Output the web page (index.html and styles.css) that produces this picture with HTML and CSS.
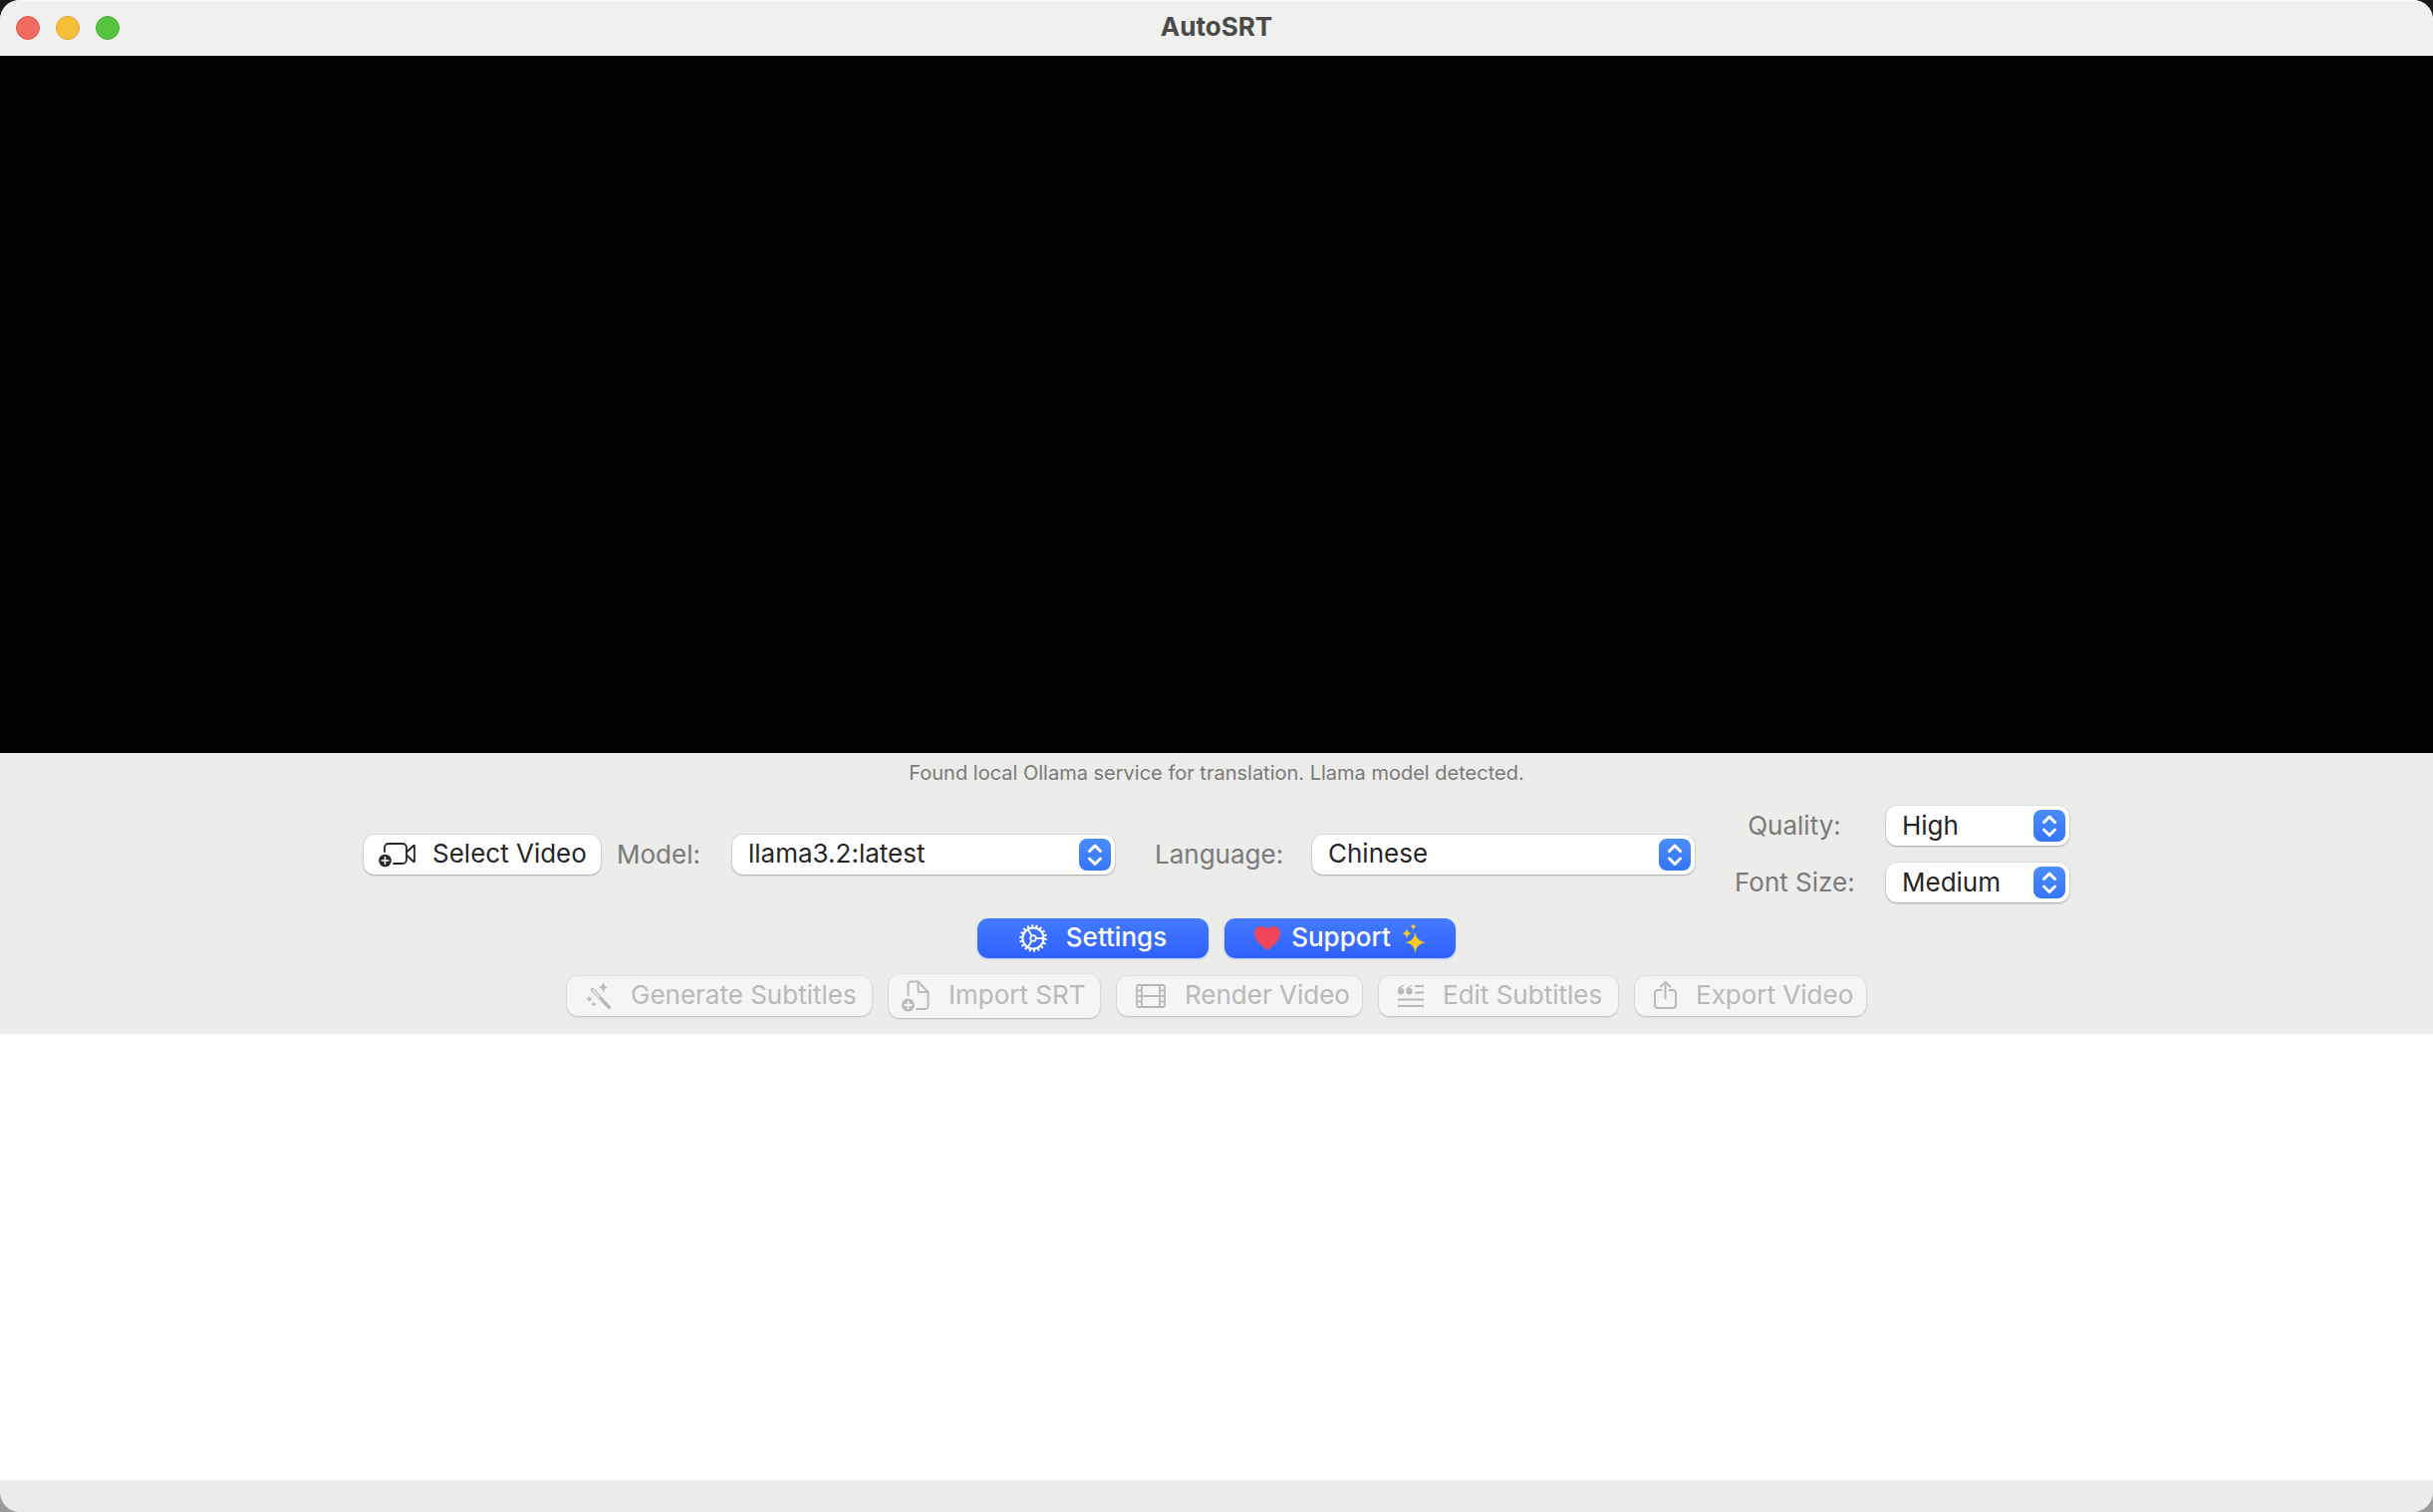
FILE: index.html
```html
<!DOCTYPE html>
<html lang="en">
<head>
<meta charset="utf-8">
<title>AutoSRT</title>
<link rel="stylesheet" href="styles.css">
</head>
<body>
<div class="window">
  <header class="titlebar">
    <div class="lights">
      <button class="light close" type="button" aria-label="Close"></button>
      <button class="light minimize" type="button" aria-label="Minimize"></button>
      <button class="light zoom" type="button" aria-label="Zoom"></button>
    </div>
    <h1 class="title">AutoSRT</h1>
  </header>

  <section class="video" aria-label="Video preview"></section>

  <main class="controls">
    <p class="status">Found local Ollama service for translation. Llama model detected.</p>

    <div class="row options">
      <button class="btn select-video" type="button">
        <svg width="37" height="26" viewBox="0 0 37 26" fill="none" stroke="currentColor" stroke-width="1.8" stroke-linejoin="round" stroke-linecap="round" aria-hidden="true">
          <path d="M6 10V6a4 4 0 0 1 4-4h14a4 4 0 0 1 4 4v12a4 4 0 0 1-4 4H15"/>
          <path d="M28 10.500l7-6.500q1-.7 1 .5v15q0 1.200-1 .5L28 13.500"/>
          <circle cx="6.500" cy="19" r="6.300" fill="currentColor" stroke="none"/>
          <path d="M6.500 15.500v7M3 19h7" stroke="#fff" stroke-width="1.600"/>
        </svg>
        <span>Select Video</span>
      </button>
      <div class="field model">
        <label for="model">Model:</label>
        <div class="popup wide">
          <select id="model"><option>llama3.2:latest</option></select>
          <svg class="stepper" width="32" height="32" viewBox="0 0 32 32" aria-hidden="true"><path d="M10.500 12.500l5.500-5.500 5.500 5.500M10.500 20l5.500 5.500 5.500-5.500"/></svg>
        </div>
      </div>
      <div class="field language">
        <label for="language">Language:</label>
        <div class="popup wide">
          <select id="language"><option>Chinese</option></select>
          <svg class="stepper" width="32" height="32" viewBox="0 0 32 32" aria-hidden="true"><path d="M10.500 12.500l5.500-5.500 5.500 5.500M10.500 20l5.500 5.500 5.500-5.500"/></svg>
        </div>
      </div>
      <div class="output">
        <label for="quality">Quality:</label>
        <div class="popup">
          <select id="quality"><option>High</option></select>
          <svg class="stepper" width="32" height="32" viewBox="0 0 32 32" aria-hidden="true"><path d="M10.500 12.500l5.500-5.500 5.500 5.500M10.500 20l5.500 5.500 5.500-5.500"/></svg>
        </div>
        <label for="fontsize">Font Size:</label>
        <div class="popup">
          <select id="fontsize"><option>Medium</option></select>
          <svg class="stepper" width="32" height="32" viewBox="0 0 32 32" aria-hidden="true"><path d="M10.500 12.500l5.500-5.500 5.500 5.500M10.500 20l5.500 5.500 5.500-5.500"/></svg>
        </div>
      </div>
    </div>

    <div class="row">
      <button class="btn primary" type="button">
        <svg width="28" height="28" viewBox="0 0 28 28" fill="none" stroke="currentColor" aria-hidden="true">
          <circle cx="14" cy="14" r="10.500" stroke-width="2"/>
          <circle cx="14" cy="14" r="12.500" stroke-width="2.600" stroke-dasharray="1.963 2.400"/>
          <circle cx="14" cy="14" r="2.800" stroke-width="1.800"/>
          <path d="M17 14h7.500M12.500 11.400L8.800 5M12.500 16.600L8.800 23" stroke-width="1.800"/>
        </svg>
        <span>Settings</span>
      </button>
      <button class="btn primary support" type="button">
        <svg width="26" height="24" viewBox="0 0 26 24" aria-hidden="true"><path fill="#f2475a" d="M13 24C8 20.500 0 14 0 7 0 3 3 0 6.800 0 9.600 0 12 .8 13 3c1-2.200 3.400-3 6.200-3C23 0 26 3 26 7c0 7-8 13.500-13 17z"/></svg>
        <span>Support</span>
        <svg width="24" height="30" viewBox="0 0 24 30" fill="#fccb20" aria-hidden="true">
          <path d="M13.500 9Q14.500 18 24 19.200 14.500 20.400 13.500 30 12.500 20.400 3.500 19.200 12.500 18 13.500 9z"/>
          <path d="M5 5Q5.500 9.500 10 10 5.500 10.500 5 15.500 4.500 10.500 0 10 4.500 9.500 5 5z"/>
          <path d="M11.500 0Q11.900 2.800 14.500 3.200 11.900 3.600 11.500 6.500 11.100 3.600 8.500 3.200 11.100 2.800 11.500 0z"/>
        </svg>
      </button>
    </div>

    <div class="row actions">
      <button class="btn generate" type="button" disabled>
        <svg width="26" height="28" viewBox="0 0 26 28" fill="currentColor" aria-hidden="true">
          <path d="M17.500 0Q18.200 4.500 22 5.200 18.200 5.900 17.500 10.400 16.800 5.900 13 5.200 16.800 4.500 17.500 0z"/>
          <path d="M3.500 13.500Q4 16.500 7 17 4 17.500 3.500 20.500 3 17.500 0 17 3 16.500 3.500 13.500z"/>
          <path d="M8 19.500Q8.400 21.800 10.500 22.200 8.400 22.600 8 25 7.600 22.600 5.500 22.200 7.600 21.800 8 19.500z"/>
          <path d="M6.500 7.500l17 18" stroke="currentColor" stroke-width="3.400" stroke-linecap="round"/>
          <path d="M7 8l6.500 7" stroke="#f5f5f5" stroke-width="1.300" stroke-linecap="round"/>
        </svg>
        <span>Generate Subtitles</span>
      </button>
      <button class="btn import" type="button" disabled>
        <svg width="28" height="32" viewBox="0 0 28 32" fill="none" stroke="currentColor" stroke-width="1.900" stroke-linejoin="round" stroke-linecap="round" aria-hidden="true">
          <path d="M6.500 15V4.500a3 3 0 0 1 3-3H16.500L26.500 12v14a3 3 0 0 1-3 3H15"/>
          <path d="M16.500 2v8a2 2 0 0 0 2 2h7.500"/>
          <circle cx="6.500" cy="25" r="6.500" fill="currentColor" stroke="none"/>
          <path d="M6.500 21.500v7M3 25h7" stroke="#f5f5f5"/>
        </svg>
        <span>Import SRT</span>
      </button>
      <button class="btn render" type="button" disabled>
        <svg width="30" height="24" viewBox="0 0 30 24" fill="none" stroke="currentColor" stroke-width="1.800" aria-hidden="true">
          <rect x="1" y="1" width="28" height="22" rx="2"/>
          <path d="M6 1v22M24 1v22M6 12h18M1 6.500h5M1 12h5M1 17.500h5M24 6.500h5M24 12h5M24 17.500h5"/>
        </svg>
        <span>Render Video</span>
      </button>
      <button class="btn edit" type="button" disabled>
        <svg width="26" height="24" viewBox="0 0 26 24" fill="currentColor" aria-hidden="true">
          <path d="M17 1h9v2h-9zM17 7.500h9v2h-9zM0 14.500h26v2H0zM0 21h26v2H0z"/>
          <path d="M6 1C2.500 1.500 0 3.500 0 7.200A3.200 3.200 0 1 0 3.200 4C3.800 3 4.600 2.400 6 2zM14.500 1C11 1.500 8.300 3.500 8.300 7.200A3.200 3.200 0 1 0 11.500 4C12.100 3 12.900 2.400 14.500 2z"/>
        </svg>
        <span>Edit Subtitles</span>
      </button>
      <button class="btn export" type="button" disabled>
        <svg width="23" height="32" viewBox="0 0 23 32" fill="none" stroke="currentColor" stroke-width="1.900" stroke-linecap="round" stroke-linejoin="round" aria-hidden="true">
          <path d="M7.500 10H4a3 3 0 0 0-3 3v12a3 3 0 0 0 3 3h15a3 3 0 0 0 3-3V13a3 3 0 0 0-3-3h-3.500"/>
          <path d="M11.500 18.500V2M6.800 6.500l4.700-4.700 4.700 4.700"/>
        </svg>
        <span>Export Video</span>
      </button>
    </div>
  </main>

  <section class="log" aria-label="Subtitles"></section>
  <footer class="bottombar"></footer>
</div>
</body>
</html>
```
FILE: styles.css
```css
* {
  box-sizing: border-box;
}

body {
  margin: 0;
  background: linear-gradient(#1c1d1a, #9c9c9c);
  font-family: Inter, "Liberation Sans", sans-serif;
  font-size: 26px;
  color: #262626;
}

.window {
  display: flex;
  flex-direction: column;
  min-height: 100vh;
  overflow: hidden;
  border-radius: 20px;
  background: #ececea;
}

.titlebar {
  display: grid;
  grid-template-columns: 1fr auto 1fr;
  align-items: center;
  height: 56px;
  padding: 0 16px;
  background: #f0f0ee;
  box-shadow: inset 0 1px 0 #fafafa;
}

.lights {
  display: flex;
  gap: 16px;
}

.light {
  width: 24px;
  height: 24px;
  padding: 0;
  border: 1px solid;
  border-radius: 50%;
}

.close {
  background: #f16b5e;
  border-color: #dc5a4d;
}

.minimize {
  background: #f5bf3a;
  border-color: #dba52d;
}

.zoom {
  background: #57c441;
  border-color: #46ad33;
}

.title {
  margin: 0;
  padding-bottom: 2px;
  font-size: 26px;
  line-height: 32px;
  font-weight: 700;
  color: #4a4a49;
}

.video {
  flex: 700 0 0;
  background: #000;
}

.controls {
  display: flex;
  flex-direction: column;
  gap: 16px;
  padding: 8px 0 16px;
}

.status {
  margin: 0;
  text-align: center;
  font-size: 20px;
  line-height: 24px;
  color: #7a7a79;
}

.row {
  display: flex;
  justify-content: center;
  align-items: center;
  gap: 16px;
}

.options {
  padding-top: 5px;
}

.actions {
  gap: 17px;
}

.btn {
  display: flex;
  align-items: center;
  gap: 19px;
  height: 40px;
  padding: 0 0 0 19px;
  border: 0;
  border-radius: 11px;
  background: #fff;
  box-shadow: 0 0 1px 1px rgba(0, 0, 0, 0.06), 0 1px 2px rgba(0, 0, 0, 0.25);
  color: inherit;
  font: inherit;
  line-height: 32px;
  white-space: nowrap;
}

.btn svg {
  flex: none;
}

.btn span {
  padding-bottom: 2px;
}

.btn:disabled {
  background: #f5f5f5;
  box-shadow: 0 0 1px 1px rgba(0, 0, 0, 0.04), 0 1px 2px rgba(0, 0, 0, 0.18);
  color: #b9b9b9;
}

.select-video {
  width: 238px;
  padding-left: 15px;
  gap: 17px;
}

.generate {
  width: 306px;
}

.import {
  width: 212px;
  height: 44px;
  padding-left: 13px;
}

.render {
  width: 246px;
}

.edit {
  width: 240px;
}

.export {
  width: 232px;
}

.primary {
  justify-content: center;
  width: 232px;
  padding: 0;
  background: linear-gradient(#447aff, #2f61fe);
  box-shadow: 0 1px 2px rgba(47, 97, 254, 0.35);
  color: #fff;
  font-weight: 500;
}

.support {
  gap: 11px;
}

.field {
  display: flex;
  align-items: center;
  justify-content: space-between;
}

label {
  line-height: 32px;
  color: #7a7a79;
}

.model {
  width: 500px;
}

.language {
  width: 542px;
  margin-left: 24px;
}

.popup {
  display: grid;
  width: 184px;
}

.wide {
  width: 384px;
}

.popup select {
  grid-area: 1 / 1;
  width: 100%;
  height: 40px;
  padding: 0 48px 2px 16px;
  border: 0;
  border-radius: 11px;
  appearance: none;
  background: #fff;
  box-shadow: 0 0 1px 1px rgba(0, 0, 0, 0.06), 0 1px 2px rgba(0, 0, 0, 0.25);
  color: inherit;
  font: inherit;
}

.stepper {
  grid-area: 1 / 1;
  place-self: center end;
  margin-right: 4px;
  border-radius: 8px;
  background: linear-gradient(#4b8dfb, #3575fa);
  fill: none;
  stroke: #fff;
  stroke-width: 3;
  stroke-linecap: round;
  stroke-linejoin: round;
  pointer-events: none;
}

.output {
  display: grid;
  grid-template-columns: 120px 184px;
  column-gap: 32px;
  row-gap: 17px;
  align-items: center;
  margin-left: 24px;
}

.output label {
  text-align: center;
  white-space: nowrap;
}

.log {
  flex: 448 0 0;
  background: #fff;
}

.bottombar {
  height: 32px;
}
```
